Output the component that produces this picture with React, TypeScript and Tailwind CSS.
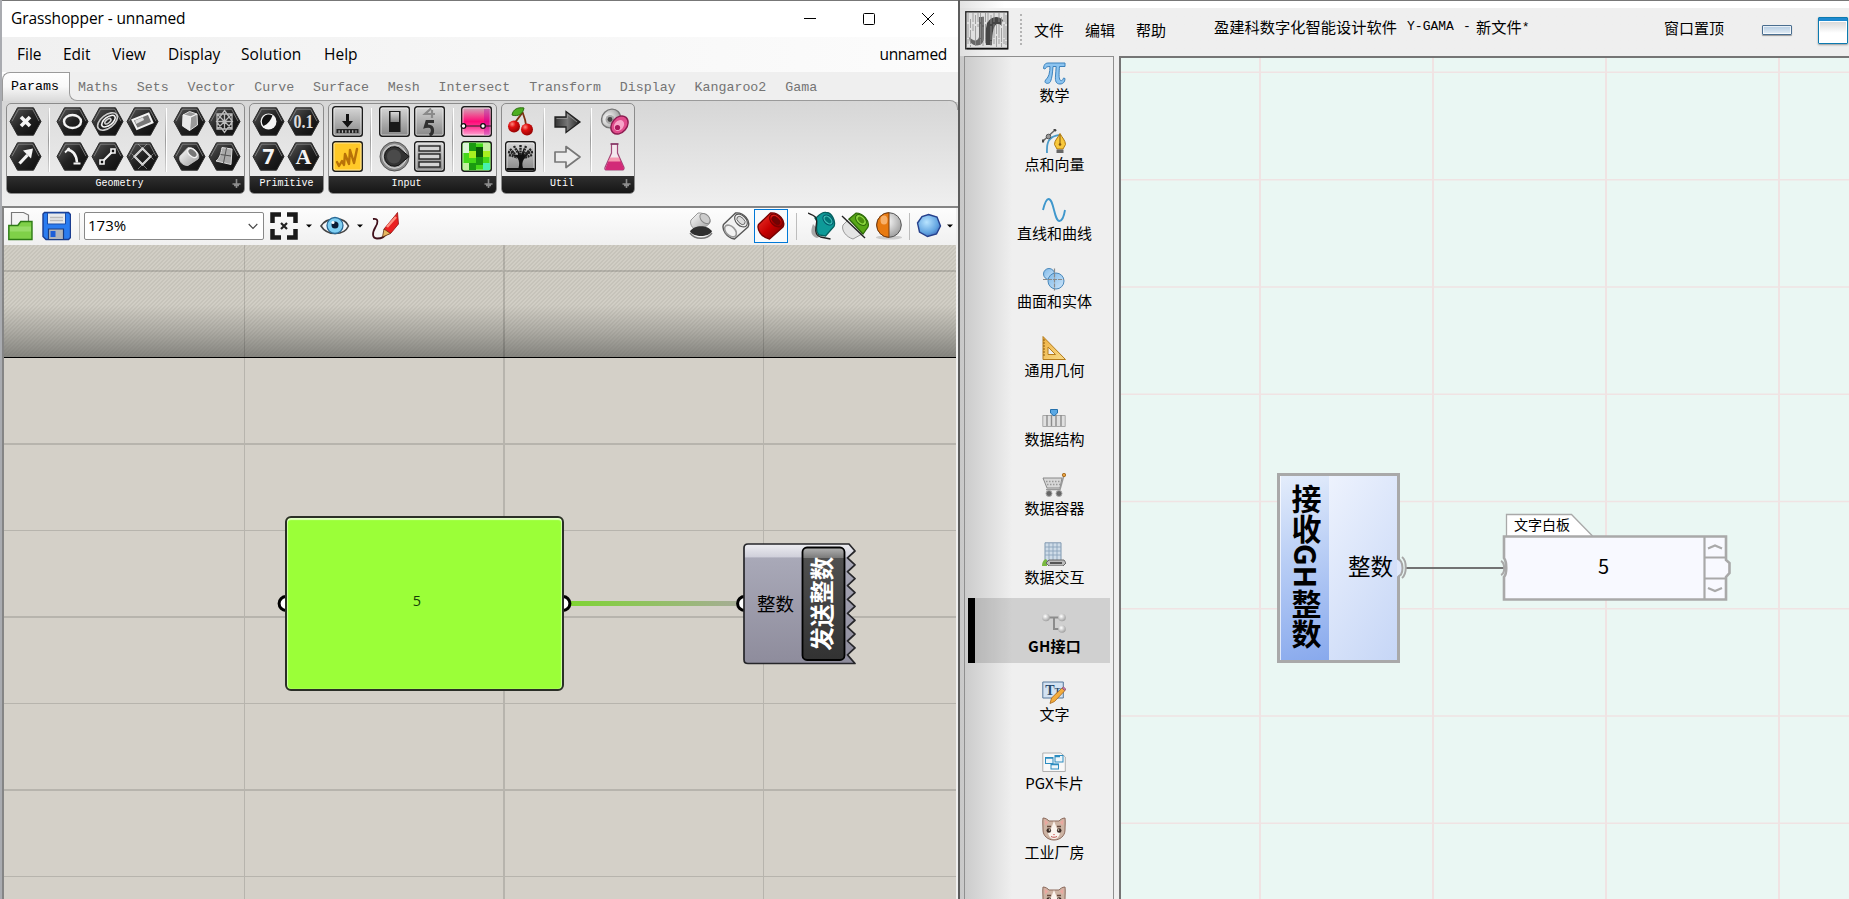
import React from "react";

const UI = "font-['Open_Sans','Noto_Sans_CJK_SC',sans-serif]";
const MONO = "font-['Liberation_Mono','Noto_Sans_CJK_SC',monospace]";
const CJK = "font-['Noto_Sans_CJK_SC',sans-serif]";

/* ---------- shared gradients ---------- */

function Defs() {
  return (
    <svg width="0" height="0" className="absolute">
      <defs>
        <linearGradient id="hex" x1="0" y1="0" x2="1" y2="1">
          <stop offset="0" stopColor="#5a5a5a" />
          <stop offset="0.5" stopColor="#222" />
          <stop offset="1" stopColor="#0c0c0c" />
        </linearGradient>
        <linearGradient id="silver" x1="0" y1="0" x2="0" y2="1">
          <stop offset="0" stopColor="#d8d8d8" />
          <stop offset="1" stopColor="#868686" />
        </linearGradient>
        <linearGradient id="dark" x1="0" y1="0" x2="1" y2="0">
          <stop offset="0" stopColor="#333" />
          <stop offset="0.5" stopColor="#777" />
          <stop offset="1" stopColor="#222" />
        </linearGradient>
        <linearGradient id="white" x1="0" y1="0" x2="1" y2="1">
          <stop offset="0" stopColor="#fff" />
          <stop offset="1" stopColor="#999" />
        </linearGradient>
        <linearGradient id="pink" x1="0" y1="0" x2="0" y2="1">
          <stop offset="0" stopColor="#c8b4bc" />
          <stop offset="0.3" stopColor="#f04c90" />
          <stop offset="0.5" stopColor="#ff0a78" />
          <stop offset="0.7" stopColor="#ff3c98" />
          <stop offset="1" stopColor="#ffb0d8" />
        </linearGradient>
        <linearGradient id="sky" x1="0" y1="0" x2="1" y2="1">
          <stop offset="0" stopColor="#7db8e8" />
          <stop offset="1" stopColor="#cfe6fa" />
        </linearGradient>
        <linearGradient id="gold" x1="0" y1="0" x2="1" y2="1">
          <stop offset="0" stopColor="#f0b040" />
          <stop offset="1" stopColor="#f7dc8c" />
        </linearGradient>
        <radialGradient id="cherry" cx="0.35" cy="0.3" r="0.8">
          <stop offset="0" stopColor="#ff8a80" />
          <stop offset="0.35" stopColor="#e01010" />
          <stop offset="1" stopColor="#800" />
        </radialGradient>
        <radialGradient id="gem" cx="0.4" cy="0.35" r="0.8">
          <stop offset="0" stopColor="#b8e4ff" />
          <stop offset="0.6" stopColor="#62a4e0" />
          <stop offset="1" stopColor="#2c4fa8" />
        </radialGradient>
        <radialGradient id="ball" cx="0.4" cy="0.35" r="0.7">
          <stop offset="0" stopColor="#fff" />
          <stop offset="1" stopColor="#9a9a9a" />
        </radialGradient>
        <linearGradient id="redcyl" x1="0" y1="0" x2="1" y2="1">
          <stop offset="0" stopColor="#ee3a30" />
          <stop offset="0.5" stopColor="#c80000" />
          <stop offset="1" stopColor="#6c0000" />
        </linearGradient>
      </defs>
    </svg>
  );
}

/* ---------- ribbon icons ---------- */

function Hex({ children }: { children: React.ReactNode }) {
  return (
    <svg width="33" height="31" viewBox="0 0 33 31">
      <path d="M1 15.5 8.5 1.8h16L32 15.5 24.5 29.2h-16Z" fill="url(#hex)" stroke="#2a2a2a" strokeWidth="1" />
      <path d="M3 15.2 9.6 3.2h14L30 15.2" fill="none" stroke="#8a8a8a" strokeWidth="1" opacity=".8" />
      {children}
    </svg>
  );
}

function Tile({ fill = "url(#silver)", children }: { fill?: string; children: React.ReactNode }) {
  return (
    <svg width="33" height="31" viewBox="0 0 33 31">
      <rect x="1.7" y="0.7" width="29.6" height="29.6" rx="2.5" fill={fill} stroke="#1c1c1c" strokeWidth="1.4" />
      <rect x="3" y="2" width="27" height="27" rx="1.5" fill="none" stroke="#fff" strokeWidth="1" opacity=".55" />
      {children}
    </svg>
  );
}

const W = "#f4f4f4";

const icons: Record<string, React.ReactNode> = {
  cross: (
    <Hex>
      <path d="m12 11 9 9m0-9-9 9" stroke={W} strokeWidth="3.6" />
    </Hex>
  ),
  vec: (
    <Hex>
      <path d="m10.500 22.500 8-8.500" stroke={W} strokeWidth="3.200" />
      <path d="M14 9.500 24 7.500 22 17.500Z" fill={W} />
    </Hex>
  ),
  circle: (
    <Hex>
      <ellipse cx="16.500" cy="15.500" rx="8.500" ry="6.500" fill="none" stroke={W} strokeWidth="2.400" />
    </Hex>
  ),
  arc: (
    <Hex>
      <path d="M11 8.500c7 1 9.500 6 10 13" fill="none" stroke={W} strokeWidth="2.600" />
      <path d="M9 11.500 13.500 7M17.500 22.500h7" stroke={W} strokeWidth="1.800" />
    </Hex>
  ),
  spiral: (
    <Hex>
      <g fill="none" stroke="#ccc" strokeWidth="1.600" transform="rotate(-38 16.500 15.500)">
        <ellipse cx="16.500" cy="15.500" rx="11.500" ry="6.500" />
        <ellipse cx="17.500" cy="15.800" rx="8" ry="4" stroke={W} />
        <ellipse cx="17" cy="15.500" rx="3.600" ry="1.800" />
      </g>
    </Hex>
  ),
  line: (
    <Hex>
      <path d="m11.500 20.500 10-10" stroke={W} strokeWidth="2.200" />
      <path d="M9 19h4v4H9ZM20 8h4v4h-4Z" fill="#111" stroke={W} strokeWidth="1.600" />
    </Hex>
  ),
  rect: (
    <Hex>
      <path d="m6.500 14 16-6.500 4 9L11 23Z" fill="#777" stroke={W} strokeWidth="2" />
      <path d="m9 14.500 8-3.200 1 2.600-8 4Z" fill="#ddd" />
    </Hex>
  ),
  plane: (
    <Hex>
      <path d="m16.500 7.500 8 8-8 8-8-8Z" fill="none" stroke="#e4e4e4" strokeWidth="2" />
      <path d="m12 3 15.500 15.500M21 3 5.500 18.500M5.500 12.500 21 28M27.500 12.500 12 28" stroke="#bbb" strokeWidth="1" opacity=".55" />
    </Hex>
  ),
  box: (
    <Hex>
      <path d="m10 9 6.500-3.500L24 8l.5 11-8 5.500-7-4.500Z" fill="#999" stroke="#ddd" strokeWidth="1" />
      <path d="m10 9 7.500 2L24 8M17.500 11l-1 13.500" stroke={W} strokeWidth="1.300" fill="none" />
      <path d="m10 9 7.500 2-1 13.500-7-4.500Z" fill="#e8e8e8" />
    </Hex>
  ),
  mesh: (
    <Hex>
      <path
        d="M9 8h15v15H9ZM9 15.500h15M16.500 8v15M9 8l15 15M24 8 9 23M16.500 4.500l8 11-8 11-8-11Z"
        fill="none"
        stroke="#bbb"
        strokeWidth="1.300"
      />
    </Hex>
  ),
  brep: (
    <Hex>
      <path d="M15 6.500 7 15c-2 4 2 10 8 9.500L25 18c3-4-3-12-10-11.500Z" fill="url(#white)" stroke="#ccc" strokeWidth=".8" />
      <ellipse cx="19.500" cy="12" rx="5.500" ry="3.500" transform="rotate(42 19.500 12)" fill="#777" stroke={W} strokeWidth="1.400" />
    </Hex>
  ),
  surf: (
    <Hex>
      <path d="M14 6.500 24 8l-1 15.500L8 20c4-3 5-8 6-13.500Z" fill="#aaa" stroke="#ddd" />
      <path d="M12.500 13.500 23 15M18.500 7l-3 15" stroke="#555" strokeWidth="1" fill="none" />
    </Hex>
  ),
  bool: (
    <Hex>
      <circle cx="16.500" cy="15.500" r="8" fill={W} />
      <path d="M11.500 20A7 7 0 0 1 20.500 9.500C19 14 16 18 11.500 20Z" fill="#111" />
    </Hex>
  ),
  num: (
    <Hex>
      <text x="16.500" y="22" textAnchor="middle" fontSize="19" fontWeight="700" fill="#dcdcdc" className="font-['Liberation_Serif',serif]" textLength="20" lengthAdjust="spacingAndGlyphs">
        0.1
      </text>
    </Hex>
  ),
  int: (
    <Hex>
      <text x="16.500" y="22.500" textAnchor="middle" fontSize="21" fontWeight="700" fill={W} className="font-['Open_Sans',sans-serif]">
        7
      </text>
    </Hex>
  ),
  text: (
    <Hex>
      <text x="16.500" y="22.500" textAnchor="middle" fontSize="22" fontWeight="700" fill={W} className="font-['Liberation_Serif',serif]">
        A
      </text>
    </Hex>
  ),
  button: (
    <Tile>
      <path d="M15 8h3v7h4l-5.500 6.500L11 15h4Z" fill="#111" />
      <path d="M5.500 23h22v4h-22Z" fill="#222" />
      <path d="M7.500 25.500h18" stroke="#bbb" strokeWidth="2.500" strokeDasharray="1.200 2.200" />
    </Tile>
  ),
  graph: (
    <Tile fill="#ffc928">
      <path d="m6 21 2 4 3-5 2 4 1-11 4 10 1-14 4 13 3-14" fill="none" stroke="#b87208" strokeWidth="2.400" strokeLinejoin="round" strokeLinecap="round" />
    </Tile>
  ),
  toggle: (
    <Tile>
      <rect x="11" y="5" width="11.500" height="21" fill="#1a1a1a" />
      <rect x="12.500" y="6" width="8.500" height="10" fill="url(#silver)" />
    </Tile>
  ),
  knob: (
    <svg width="33" height="31" viewBox="0 0 33 31">
      <circle cx="16.500" cy="15.500" r="14.500" fill="#8a8a8a" stroke="#555" />
      <circle cx="16.500" cy="15.500" r="11.800" fill="#aaa" stroke="#e0e0e0" strokeWidth=".8" />
      <path d="M31 15.500 24 9.500a9.800 9.800 0 1 0 0 12Z" fill="#333" stroke="#111" />
      <circle cx="16" cy="15.500" r="7" fill="#4a4a4a" />
    </svg>
  ),
  digits: (
    <Tile>
      <path d="m18 2.500-6 5.500h10m-3-4v8" fill="none" stroke="#8a8a8a" strokeWidth="2.200" />
      <path d="M21 15.500h-7l-1.500 5c4-1 7 0 7 4 0 3-1 4-3 4.500" fill="none" stroke="#303030" strokeWidth="3.200" />
    </Tile>
  ),
  list: (
    <Tile>
      <g fill="#d4d4d4" stroke="#222" strokeWidth="1.400">
        <rect x="6" y="5" width="21" height="5" />
        <rect x="6" y="13" width="21" height="5" />
        <rect x="6" y="21" width="21" height="5" />
      </g>
    </Tile>
  ),
  gradient: (
    <Tile fill="url(#pink)">
      <path d="M24 3h6v26h-6Z" fill="#b000a0" opacity=".35" />
      <path d="M2 20h29" stroke="#222" />
      <circle cx="3.500" cy="20" r="2.300" fill="#fff" stroke="#111" strokeWidth="1.300" />
      <circle cx="23" cy="20" r="2.300" fill="#fff" stroke="#111" strokeWidth="1.300" />
    </Tile>
  ),
  swatch: (
    <Tile fill="#44d818">
      <path d="M3 2h6v10H3Z" fill="#dcf5d8" />
      <path d="M9 2h7v8H9ZM16 16h7v8h-7ZM9 22h7v7H9Z" fill="#1a9a10" />
      <path d="M16 6h7v10h-7Z" fill="#0a5a08" />
      <path d="M9 10h7v7H9ZM23 10h7v6h-7Z" fill="#a8f020" />
      <path d="M23 2h7v8h-7ZM3 22h6v7H3Z" fill="#c4f0a0" />
      <path d="M23 22h7v7h-7Z" fill="#48f0b0" />
    </Tile>
  ),
  cherry: (
    <svg width="33" height="31" viewBox="0 0 33 31">
      <path d="M18.500 6c-2 5-7 8-8.500 13M18.500 6c2 5 3.500 9 4 16" fill="none" stroke="#7a3010" strokeWidth="1.800" />
      <path d="M8 9c1-6 6-8 12-7-1 6-6 9-12 7Z" fill="#4caf20" stroke="#2c6e10" />
      <circle cx="10" cy="20.500" r="6" fill="url(#cherry)" />
      <circle cx="23" cy="23.500" r="6" fill="url(#cherry)" />
    </svg>
  ),
  tree: (
    <Tile>
      <path d="M14.500 27c1-4 1-7-1-10L7 13l7 1-1-6 4 6 3-7v7l6-3-6 7c-2 3-2 6-1 9Z" fill="#111" />
      <path
        d="M5 14c3 1 6 1 8 3M6 8l5 5M10 5l4 7M16.500 4v10M22 5l-3 8M27 8l-7 6M28 14l-8 3M4 11l6 1M29 11l-6 1"
        fill="none"
        stroke="#222"
        strokeWidth="2.400"
        strokeDasharray="2 .7"
      />
      <path d="M2.500 27h28v2.500h-28Z" fill="#111" />
    </Tile>
  ),
  arrow: (
    <svg width="33" height="31" viewBox="0 0 33 31">
      <path d="M4 11h11V5.500l14 10.500-14 10.500V21H4Z" fill="url(#dark)" stroke="#222" strokeWidth="1.300" />
      <path d="M5.500 12.500h11V8.500l9.500 7.500" fill="none" stroke="#999" strokeWidth=".8" />
    </svg>
  ),
  arrowLight: (
    <svg width="33" height="31" viewBox="0 0 33 31">
      <path d="M4 11h11V5.500l14 10.500-14 10.500V21H4Z" fill="#ececec" stroke="#777" strokeWidth="1.700" strokeLinejoin="round" />
    </svg>
  ),
  cells: (
    <svg width="33" height="31" viewBox="0 0 33 31">
      <ellipse cx="13" cy="12.500" rx="10" ry="8.800" transform="rotate(-45 13 12.500)" fill="url(#ball)" stroke="#777" strokeWidth="1.400" />
      <circle cx="12" cy="13.500" r="4.500" fill="#aaa" />
      <circle cx="12" cy="13.500" r="2.400" fill="#444" />
      <ellipse cx="21.500" cy="19" rx="10" ry="7.500" transform="rotate(-50 21.500 19)" fill="#e04c8c" stroke="#8c1c50" strokeWidth="1.400" />
      <ellipse cx="21" cy="19.500" rx="6" ry="4.500" transform="rotate(-50 21 19.500)" fill="#f7a4c8" />
      <circle cx="19.500" cy="21.500" r="2.600" fill="#a8185c" />
    </svg>
  ),
  flask: (
    <svg width="33" height="31" viewBox="0 0 33 31">
      <path d="M13.500 3h6v9l6.500 14.500c.5 2-1 2.500-2 2.500H9c-2 0-2.500-1-2-2.500L13.500 12Z" fill="#f4e8ee" stroke="#a04878" strokeWidth="1.200" />
      <path d="M11.500 17h10l4.500 10c0 1.500-1 2-2 2H9c-1.500 0-2-1-1.500-2Z" fill="#d22a78" />
      <path d="M12 16.500h9l1.500 4H10Z" fill="#f598b0" />
      <path d="M12.500 3h8" stroke="#803060" strokeWidth="1.500" />
    </svg>
  ),
};

type Group = { label: string; plus: boolean; width: string; cols: (string[] | null)[] };

const groups: Group[] = [
  {
    label: "Geometry",
    plus: true,
    width: "w-[239px]",
    cols: [["cross", "vec"], null, ["circle", "arc"], ["spiral", "line"], ["rect", "plane"], null, ["box", "brep"], ["mesh", "surf"]],
  },
  { label: "Primitive", plus: false, width: "w-[75px]", cols: [["bool", "int"], ["num", "text"]] },
  {
    label: "Input",
    plus: true,
    width: "w-[169px]",
    cols: [["button", "graph"], null, ["toggle", "knob"], ["digits", "list"], null, ["gradient", "swatch"]],
  },
  {
    label: "Util",
    plus: true,
    width: "w-[134px]",
    cols: [["cherry", "tree"], null, ["arrow", "arrowLight"], null, ["cells", "flask"]],
  },
];

function RibbonGroup({ label, plus, width, cols }: Group) {
  return (
    <div className={`${width} flex h-[91px] flex-col overflow-hidden rounded-[5px] border border-[#8c8c8c] bg-gradient-to-b from-[#dcdcdc] to-[#eeeeee]`}>
      <div className="flex h-[72px] pl-px">
        {cols.map((c, i) =>
          c ? (
            <div key={i} className="flex w-[35px] shrink-0 flex-col items-center">
              {c.map((n) => (
                <div key={n} className="flex h-[35px] items-center">
                  {icons[n]}
                </div>
              ))}
            </div>
          ) : (
            <div key={i} className="flex w-3 shrink-0 justify-center py-1">
              <div className="w-[2px] border-r border-white bg-gradient-to-b from-[#dcdcdc] via-[#9c9c9c] to-[#d4d4d4]" />
            </div>
          ),
        )}
      </div>
      <div className={`relative flex flex-1 justify-center bg-gradient-to-b from-[#303030] to-[#161616] ${plus ? "pr-[12px]" : ""}`}>
        <span className={`${MONO} text-[10px] leading-[15px] text-white`}>{label}</span>
        {plus && (
          <svg className="absolute top-[3px] right-[3px]" width="9" height="10" viewBox="0 0 9 10">
            <path d="M4.500 0v9M.5 5h8M2 6.500h5" stroke="#8c8c8c" strokeWidth="1.600" />
          </svg>
        )}
      </div>
    </div>
  );
}

/* ---------- left window ---------- */

function Caret() {
  return (
    <svg width="6" height="4" viewBox="0 0 6 4">
      <path d="M0 .5h6L3 3.500Z" fill="#000" />
    </svg>
  );
}

function Cylinder({ fill, stroke, mouth }: { fill: string; stroke: string; mouth: string }) {
  return (
    <g>
      <path d="M14.500 2 2.500 13.500c-2 5 3 13 11 14.500L27 16c3-6-4-15-12.500-14Z" fill={fill} stroke={stroke} strokeWidth="1.400" strokeLinejoin="round" />
      <ellipse cx="20" cy="9.500" rx="7.500" ry="5" transform="rotate(45 20 9.500)" fill={fill} stroke={stroke} strokeWidth="1.200" />
      <ellipse cx="20" cy="9.500" rx="5" ry="2.900" transform="rotate(45 20 9.500)" fill={mouth} stroke={stroke} strokeWidth=".8" />
    </g>
  );
}

function GrassToolbar() {
  return (
    <div className="flex h-[37px] shrink-0 items-center bg-gradient-to-b from-[#fdfdfd] to-[#f0f0f0] pb-[1px] pl-[4px]">
      <svg width="26" height="30" viewBox="0 0 26 30">
        <path d="M3.500 1.500h12l5 2.500v14h-17Z" fill="#f4f4f4" stroke="#777" strokeWidth="1.200" />
        <path d="M.8 28.500v-14h9l3-4H24v18Z" fill="#7fd048" stroke="#2c7a14" strokeWidth="1.400" />
        <path d="M2 18h21" stroke="#b0e888" strokeWidth="5" opacity=".5" />
      </svg>
      <svg className="ml-[8px]" width="29" height="30" viewBox="0 0 29 30">
        <path d="M2.500 1.500h24l2 2v23l-2 2H4l-3-3V3Z" fill="#2a7cf0" stroke="#1a3c90" strokeWidth="1.400" />
        <path d="M5.500 2h18v11h-18Z" fill="#e8eaec" stroke="#1a4ca8" />
        <path d="M8 6.500h13M8 9.500h13" stroke="#bbb" strokeWidth="1.500" />
        <path d="M6.500 18h15v10.500h-15Z" fill="#b0b4ba" stroke="#1a3c80" strokeWidth="1.200" />
        <path d="M8.500 20h5v6h-5Z" fill="#1c5ed8" />
      </svg>
      <div className="ml-[8px] h-[27px] w-px bg-[#bdbdbd]" />
      <div className="ml-[4px] flex h-[28px] w-[180px] items-center justify-between rounded-[2px] border border-[#888] bg-white pr-[5px] pl-[3px]">
        <span className="-mt-px text-[15px] leading-none">173%</span>
        <svg width="10" height="7" viewBox="0 0 10 7">
          <path d="m.7 1 4.300 4.500L9.300 1" fill="none" stroke="#444" strokeWidth="1.100" />
        </svg>
      </div>
      <svg className="ml-[5px]" width="30" height="30" viewBox="0 0 30 30">
        <path d="M3.500 12V3.500H12M18 3.500h8.500V12M26.500 18v8.500H18M12 26.500H3.500V18" fill="none" stroke="#1a1a1a" strokeWidth="4.500" />
        <path d="m12 12 6 6m0-6-6 6" stroke="#222" strokeWidth="2.200" />
      </svg>
      <div className="ml-[7px] flex">
        <Caret />
      </div>
      <svg className="ml-[8px]" width="30" height="22" viewBox="0 0 30 22">
        <path d="M1 11C6 2.500 24 .5 28.500 11 24 21 7 21 1 11Z" fill="#f4f6f8" stroke="#444" strokeWidth="1.600" />
        <circle cx="15" cy="10.500" r="8" fill="#7fd0f4" stroke="#2a6a96" strokeWidth="1.300" />
        <circle cx="15" cy="10" r="3.500" fill="#0a1c34" />
        <circle cx="13" cy="7.500" r="1.500" fill="#fff" />
      </svg>
      <div className="ml-[7px] flex">
        <Caret />
      </div>
      <svg className="ml-[8px]" width="30" height="30" viewBox="0 0 30 30">
        <path d="M2 8c6-1 5 4 2.500 8C1 22 1 27 6 27.500c6 0 7-2 9.500-5" fill="none" stroke="#40101a" strokeWidth="1.800" />
        <path d="M13 18 25 3.500l1.500-2L27.500 13 20 22l-5 2Z" fill="#ea2020" stroke="#901010" strokeWidth=".8" />
        <path d="m11.500 26 1.500-8 6.500 4.500Z" fill="#e8b860" stroke="#603010" strokeWidth=".8" />
        <path d="m16 16 9-10" stroke="#ff9080" strokeWidth="2.500" />
      </svg>

      <div className="ml-auto flex items-center">
        <svg width="28" height="30" viewBox="0 0 28 30">
          <path d="M11 2 4 9c-2 5 3 11 9 11l9-7c4-5-4-12-11-11Z" fill="url(#white)" stroke="#999" />
          <ellipse cx="18" cy="7.500" rx="6" ry="4" transform="rotate(45 18 7.500)" fill="#ccc" stroke="#888" />
          <path d="M3 20.500c4-7 18-7 22 0-4 6-18 6-22 0Z" fill="#303030" />
          <path d="M3 22c5 7 17 7 22 0" fill="none" stroke="#777" strokeWidth="1.400" />
        </svg>
        <svg className="ml-[6px]" width="30" height="30" viewBox="0 0 30 30">
          <Cylinder fill="#f2f2f2" stroke="#555" mouth="#dcdcdc" />
          <ellipse cx="9.500" cy="20" rx="7" ry="4.500" transform="rotate(45 9.500 20)" fill="none" stroke="#999" strokeWidth="1.600" />
        </svg>
        <div className="ml-[3px] flex h-[34px] w-[34px] items-center justify-center border border-[#0078d7] bg-[#f8fafc]">
          <svg width="30" height="30" viewBox="0 0 30 30">
            <Cylinder fill="url(#redcyl)" stroke="#700" mouth="#700404" />
          </svg>
        </div>
        <div className="ml-[8px] h-[27px] w-px bg-[#bdbdbd]" />
        <svg className="ml-[11px]" width="28" height="30" viewBox="0 0 28 30">
          <path d="M5 13c-3 8-2 12 4 14l6-3Z" fill="#777" opacity=".6" />
          <path d="M9 6c3-3 6-5 9-4.500 6 0 10 9 8 14L17.500 25 11 24c-3-3-3-6-2-11 0-3 0-4-2-6Z" fill="#0e9a98" stroke="#06605e" strokeWidth="1.300" />
          <ellipse cx="20" cy="9" rx="6" ry="4" transform="rotate(45 20 9)" fill="#3cbcb4" stroke="#056" />
          <ellipse cx="20" cy="9" rx="4" ry="2.200" transform="rotate(45 20 9)" fill="#077" />
          <path d="M0 2c7 3 9.500 4 8.500 10-1 6-2 12 4 14l10 2" fill="none" stroke="#222" strokeWidth="1.300" />
        </svg>
        <svg className="ml-[5px]" width="29" height="30" viewBox="0 0 29 30">
          <path d="M8 8 2 14c-2 5 3 12 10 14l9-5Z" fill="#e4e4e4" stroke="#999" />
          <path d="m8 8 7-6c7 0 14 8 12 14l-5 7Z" fill="#58a818" stroke="#2c6808" strokeWidth="1.200" />
          <ellipse cx="20" cy="9" rx="6.500" ry="4.200" transform="rotate(45 20 9)" fill="#8ed840" stroke="#2c6808" />
          <ellipse cx="20" cy="9" rx="4" ry="2.300" transform="rotate(45 20 9)" fill="#4a9010" />
          <path d="m1 5 23 22" stroke="#222" strokeWidth="1.400" />
        </svg>
        <svg className="ml-[5px]" width="29" height="30" viewBox="0 0 29 30">
          <ellipse cx="14" cy="26.500" rx="13" ry="2" fill="#bbb" opacity=".7" />
          <circle cx="14" cy="14" r="12.300" fill="url(#ball)" stroke="#555" />
          <path d="M14 1.700a12.300 12.300 0 0 0 0 24.600Z" fill="#e87a10" stroke="#7a3a08" />
          <ellipse cx="9" cy="9" rx="3.500" ry="4.500" fill="#ffc890" opacity=".7" />
        </svg>
        <div className="ml-[5px] h-[27px] w-px bg-[#bdbdbd]" />
        <svg className="ml-[6px]" width="26" height="26" viewBox="0 0 26 26">
          <path d="M12.500 1.500 21 4l3.500 9-4 8-9 2.500-8-4.500L1.500 10 6 3.500Z" fill="url(#gem)" stroke="#26408c" strokeWidth="1.400" />
        </svg>
        <div className="mr-[3px] ml-[5px] flex">
          <Caret />
        </div>
      </div>
    </div>
  );
}

function Zigzag() {
  let d = "M5 1H106";
  const peaks = 8;
  for (let i = 0; i < peaks; i++) {
    const y = 8 + i * 13.85;
    d += ` L112 ${y} L104.500 ${y + 6.9}`;
  }
  d += " L112 120.500 H5 Q1 120.500 1 116.500 V5 Q1 1 5 1Z";
  return (
    <svg width="114" height="122" viewBox="0 0 114 122">
      <defs>
        <linearGradient id="body" x1="0" y1="0" x2="0" y2="1">
          <stop offset="0" stopColor="#eeeef2" />
          <stop offset="0.11" stopColor="#cfcfda" />
          <stop offset="0.115" stopColor="#a9a9b8" />
          <stop offset="1" stopColor="#8e8c9c" />
        </linearGradient>
        <linearGradient id="cap" x1="0" y1="0" x2="0" y2="1">
          <stop offset="0" stopColor="#b4b4b4" />
          <stop offset="0.09" stopColor="#7c7c7c" />
          <stop offset="0.095" stopColor="#505050" />
          <stop offset="1" stopColor="#323232" />
        </linearGradient>
      </defs>
      <path d={d} fill="url(#body)" stroke="#26262a" strokeWidth="1.700" strokeLinejoin="round" />
      <rect x="59.500" y="4.500" width="42" height="112.500" rx="4.500" fill="url(#cap)" stroke="#000" strokeWidth="1.800" />
    </svg>
  );
}

function GrassCanvas() {
  return (
    <div className="relative flex-1 overflow-hidden bg-[#d4d0c8]">
      <div className="absolute inset-x-0 top-0 h-[112px] bg-[repeating-linear-gradient(135deg,#d1cec5_0px,#d1cec5_1.400px,#c6c3ba_1.400px,#c6c3ba_2.828px)]" />
      <div className="absolute inset-x-0 top-[60px] h-[52px] bg-gradient-to-b from-transparent via-[#6c6c68]/35 to-[#6c6c68]/75" />
      <svg className="absolute top-0 left-0" width="952" height="654" viewBox="0 0 952 654">
        <g fill="#000" opacity=".13">
          <path d="M240 0h1v654h-1ZM499 0h2v654h-2ZM759 0h1v654h-1Z" />
          <path d="M0 25h952v2H0ZM0 198h952v2H0ZM0 285h952v1H0ZM0 371h952v2H0ZM0 458h952v1H0ZM0 544h952v2H0ZM0 631h952v1H0Z" />
        </g>
        <path d="M0 112h952v1H0Z" fill="#000" />
        <defs>
          <linearGradient id="wire" x1="0" y1="0" x2="1" y2="0">
            <stop offset="0" stopColor="#7fd432" />
            <stop offset="1" stopColor="#a6ac96" />
          </linearGradient>
        </defs>
        <path d="M564 356h172v5H564Z" fill="url(#wire)" />
        <circle cx="282" cy="358.500" r="6.900" fill="#fff" stroke="#000" strokeWidth="3" />
        <circle cx="559" cy="358.500" r="6.900" fill="#fff" stroke="#000" strokeWidth="3" />
        <circle cx="740.500" cy="358.500" r="6.900" fill="#fff" stroke="#000" strokeWidth="3" />
      </svg>
      <div className="absolute top-[271px] left-[281px] flex h-[175px] w-[279px] items-center justify-center rounded-[6px] border-[2px] border-[#2a2e26] bg-[#9bff38] shadow-[inset_0_2px_1px_#ffffffaa,inset_1px_0_1px_#ffffff88,inset_-1px_0_1px_#ffffff88]">
        <span className="-mt-[5px] -ml-[15px] text-[14.500px] leading-none text-[#123c06]">5</span>
      </div>
      <div className="absolute top-[298px] left-[739px]">
        <Zigzag />
        <span className={`absolute top-[49px] left-[14px] ${CJK} text-[18.500px] leading-[22px] whitespace-nowrap`}>整数</span>
        <div className="absolute top-[4px] left-[58px] flex h-[113px] w-[42px] items-center justify-center">
          <span className={`-rotate-90 ${CJK} text-[23.500px] leading-none font-bold whitespace-nowrap text-white`}>发送整数</span>
        </div>
      </div>
    </div>
  );
}

const tabs = ["Maths", "Sets", "Vector", "Curve", "Surface", "Mesh", "Intersect", "Transform", "Display", "Kangaroo2", "Gama"];

function GrasshopperWindow() {
  return (
    <div className={`flex h-full w-[958px] shrink-0 flex-col border-l-2 border-[#a9abb0] bg-[#efefef] ${UI} text-black`}>
      <div className="flex h-[37px] shrink-0 items-center border-t border-[#777] bg-white pl-[9px]">
        <span className="text-[15.500px] tracking-[-0.100px]">Grasshopper - unnamed</span>
        <div className="ml-auto flex items-center gap-[47px] pr-[24px]">
          <svg width="12" height="12" viewBox="0 0 12 12">
            <path d="M0 5.500h12" stroke="#000" />
          </svg>
          <svg width="12" height="12" viewBox="0 0 12 12">
            <rect x=".5" y=".5" width="11" height="11" rx="1" fill="none" stroke="#000" />
          </svg>
          <svg width="12" height="12" viewBox="0 0 12 12">
            <path d="m0 0 12 12M12 0 0 12" stroke="#000" />
          </svg>
        </div>
      </div>
      <div className="flex h-[35px] shrink-0 items-center bg-gradient-to-r from-[#f0f0f0] to-[#fcfcfc] pt-px pr-[11px] pl-[15px] text-[15.500px]">
        <span className="w-[46px]">File</span>
        <span className="w-[49px]">Edit</span>
        <span className="w-[56px]">View</span>
        <span className="w-[73px]">Display</span>
        <span className="w-[83px] tracking-[0.120px]">Solution</span>
        <span>Help</span>
        <span className="ml-auto tracking-[-0.300px]">unnamed</span>
      </div>
      <div className="relative z-10 -mb-px flex h-[29px] shrink-0 bg-gradient-to-b from-white via-[#f8f8f8] to-[#dadada]">
        <div className={`flex w-[67px] items-center rounded-tl-[8px] border-t border-l border-[#9a9a9a] pb-px pl-[8px] ${MONO} text-[13.300px]`}>
          Params
        </div>
        <div className={`flex flex-1 items-center gap-[18.850px] rounded-bl-[8px] border-b border-l border-[#9a9a9a] bg-[#efefef] pt-[3px] pl-[8px] ${MONO} text-[13.300px] text-[#747474]`}>
          {tabs.map((t) => (
            <span key={t}>{t}</span>
          ))}
        </div>
        <div className="-mb-px w-[10px] bg-[#efefef]">
          <div className="mt-[28px] h-[10px] rounded-tr-[8px] border-t border-r border-[#9a9a9a] bg-[#d8d8d8]" />
        </div>
      </div>
      <div className="flex h-[106px] shrink-0 gap-1 bg-gradient-to-b from-[#d6d6d6] to-[#efefef] pt-[3px] pl-[4px]">
        {groups.map((g) => (
          <RibbonGroup key={g.label} {...g} />
        ))}
      </div>
      <div className="flex min-h-0 flex-1 flex-col border-t-2 border-l-2 border-[#858585] pr-[2px]">
        <GrassToolbar />
        <GrassCanvas />
      </div>
    </div>
  );
}

/* ---------- right window ---------- */

function Cat() {
  return (
    <svg width="24" height="24" viewBox="0 0 24 24">
      <path d="M1 1c3 0 5 2 6 3h10c1-1 3-3 6-3 .5 4 0 8 0 12 0 6-5 10-11 10S1 19 1 13C1 9 .5 5 1 1Z" fill="#cdb4a4" stroke="#8c6a5c" strokeWidth="1" />
      <path d="m2.500 2.500 4 3-3.500 3ZM21.500 2.500l-4 3 3.500 3Z" fill="#eaa8a0" />
      <path d="M12 4c2 5 3 9 6 12-1 4-3 6-6 6s-5-2-6-6c3-3 4-7 6-12Z" fill="#fbf4ee" />
      <path d="M5 9.500h4M15 9.500h4" stroke="#66483c" strokeWidth="1.500" />
      <circle cx="6.800" cy="13.500" r="2.300" fill="#3c2c26" />
      <circle cx="17.200" cy="13.500" r="2.300" fill="#3c2c26" />
      <circle cx="7.500" cy="13" r=".8" fill="#e8e0d0" />
      <circle cx="16.500" cy="13" r=".8" fill="#e8e0d0" />
      <path d="M9 19.500c2 1 4 1 6 0" stroke="#c0504c" fill="none" />
      <path d="M11 17h2l-1 1.500Z" fill="#d0605c" />
    </svg>
  );
}

const sideIcons: Record<string, React.ReactNode> = {
  math: (
    <svg width="24" height="24" viewBox="0 0 24 24">
      <path d="M1.500 7.500C2 2.500 4 2 7 2h16v3.500h-5.500c-.5 6-.8 11.500.5 13.500 1.500 1.500 3 0 3.500-2l1.500.5c0 4-2.500 5.500-5 5.500-4 0-5-3-4.500-8 .2-3 .5-6.500.7-9.500H11c-.5 6.500-1 11.500-2.500 15C7.500 23 3 23 3 20.500c0-2 3-3 4-7 .7-3 1-5 1-8-3 0-4 .5-5 2.500Z" fill="#8cc4f0" stroke="#3c82bc" strokeWidth="1" />
    </svg>
  ),
  pen: (
    <svg width="24" height="24" viewBox="0 0 24 24">
      <path d="M5 24c-.5-10 1-17 13-18" fill="none" stroke="#4a9ac8" strokeWidth="1.800" />
      <path d="m1 12 12-11" stroke="#666" strokeWidth="1.500" />
      <circle cx="6.500" cy="7.500" r="2.300" fill="#999" stroke="#555" />
      <path d="M1 10.500v3M12 0l2 2" stroke="#444" strokeWidth="2.200" />
      <path d="M18 4.500c2 4 5.500 7 5.500 11L21 20h-6l-2.500-4.500C12.500 11 16 9 18 4.500Z" fill="#f8c83c" stroke="#b07a10" />
      <path d="M18 6v10" stroke="#80540c" />
      <circle cx="18" cy="15.500" r="1.300" fill="#80540c" />
      <path d="M14.500 20.500h7V24h-7Z" fill="#666" />
    </svg>
  ),
  curve: (
    <svg width="24" height="24" viewBox="0 0 24 24">
      <path d="M1 12C3 4 5 1 6.500 1 12 1 12 23 17.500 23c2.500 0 4.500-5 5.500-11" fill="none" stroke="#3f97cc" strokeWidth="1.900" />
    </svg>
  ),
  surface: (
    <svg width="24" height="24" viewBox="0 0 24 24">
      <circle cx="7" cy="7" r="5.500" fill="url(#sky)" stroke="#4a88ba" />
      <circle cx="14" cy="14" r="8" fill="url(#sky)" stroke="#4a88ba" />
      <path d="M12.500 1.500v22M1 12.500h21" stroke="#8a8a8a" strokeWidth="1.200" strokeDasharray="4 1" />
    </svg>
  ),
  ruler: (
    <svg width="24" height="24" viewBox="0 0 24 24">
      <path fillRule="evenodd" d="M1 .5 23.500 23.500H1ZM6 11v7.500h7.500Z" fill="url(#gold)" stroke="#b57c1c" />
      <path d="M1 4h2M1 7h2M1 10h2M1 13h2M1 16h2M1 19h2" stroke="#8c5c10" />
    </svg>
  ),
  struct: (
    <svg width="24" height="24" viewBox="0 0 24 24">
      <path d="M.8 10.500h22.400v11H.8Z" fill="#e0e0e0" stroke="#a8a8a8" />
      <path d="M5 10v11M9.500 10v11M14 10v11M19 10v11" stroke="#8c8c8c" strokeWidth="1.400" />
      <path d="M8.500 4.500h7V8L12 11 8.500 8Z" fill="#5aa8e4" stroke="#2470ac" />
    </svg>
  ),
  cart: (
    <svg width="24" height="24" viewBox="0 0 24 24">
      <path d="M1 5h19l-2 10H5Z" fill="#d8d8d8" stroke="#888" />
      <path d="M4 8.500h14M5 11.500h13" stroke="#999" strokeDasharray="1.500 1.500" strokeWidth="1.500" />
      <path d="m22 2-4 14.500H4" fill="none" stroke="#999" strokeWidth="1.500" />
      <circle cx="7" cy="20.500" r="3" fill="#666" stroke="#aaa" />
      <circle cx="17" cy="20.500" r="3" fill="#666" stroke="#aaa" />
      <circle cx="22" cy="2" r="1.700" fill="#e8a040" stroke="#9c6010" strokeWidth=".8" />
    </svg>
  ),
  exchange: (
    <svg width="24" height="24" viewBox="0 0 24 24">
      <path d="M3 .8h16v18H3Z" fill="#cfdce8" stroke="#7f98b0" />
      <path d="M7 1v17M11 1v17M15 1v17M3 5h16M3 9h16M3 13h16" stroke="#8ca4bc" strokeWidth=".9" />
      <path d="M0 24c0-6 4-8 5-6v6Z" fill="#78b840" />
      <path d="M7 18h15l2 3-3 3H7l-3-3Z" fill="#bbb" stroke="#666" />
      <path d="M8 21h12" stroke="#555" strokeWidth="2" />
    </svg>
  ),
  gh: (
    <svg width="24" height="24" viewBox="0 0 24 24">
      <path d="M4 6.500h16M12 6.500V18h8" fill="none" stroke="#8c8c8c" strokeWidth="2" />
      <circle cx="4" cy="6.500" r="3.800" fill="url(#ball)" />
      <circle cx="20" cy="6.500" r="3.800" fill="url(#ball)" />
      <circle cx="20" cy="18" r="3.800" fill="url(#ball)" />
    </svg>
  ),
  text: (
    <svg width="24" height="24" viewBox="0 0 24 24">
      <path d="M.8 2h20.500v16H.8Z" fill="#d3e2f2" stroke="#56789c" />
      <text x="8" y="15" textAnchor="middle" fontSize="14" fontWeight="700" fill="#28486c" className="font-['Liberation_Serif',serif]">
        T
      </text>
      <text x="15.500" y="14" textAnchor="middle" fontSize="9" fontWeight="700" fill="#28486c" className="font-['Liberation_Serif',serif]">
        T
      </text>
      <path d="M8 23.500 9.500 18 20 8l3 2.500L12.500 21.500Z" fill="#f4ac3c" stroke="#a4641c" strokeWidth=".8" />
      <path d="m20 8 1.500-1 2.300 2L23 10.500Z" fill="#d080a8" stroke="#905070" strokeWidth=".8" />
    </svg>
  ),
  card: (
    <svg width="24" height="24" viewBox="0 0 24 24">
      <path d="M.8 4h18l4.500 4v14.500H.8Z" fill="#f8f8f8" stroke="#b0b0b0" />
      <g fill="#eef6fa" stroke="#2c8cc0" strokeWidth="1">
        <rect x="3.500" y="8.500" width="7.500" height="6" />
        <rect x="13" y="6.500" width="8" height="6.500" />
        <rect x="9" y="15" width="7.500" height="5" />
      </g>
      <path d="M3.500 9H11M13 7.500h5M9 15.500h7.500" stroke="#2c8cc0" strokeWidth="1.600" />
    </svg>
  ),
  cat: <Cat />,
};

const sideItems: [string, string][] = [
  ["数学", "math"],
  ["点和向量", "pen"],
  ["直线和曲线", "curve"],
  ["曲面和实体", "surface"],
  ["通用几何", "ruler"],
  ["数据结构", "struct"],
  ["数据容器", "cart"],
  ["数据交互", "exchange"],
  ["GH接口", "gh"],
  ["文字", "text"],
  ["PGX卡片", "card"],
  ["工业厂房", "cat"],
  ["", "cat"],
];

function Sidebar() {
  return (
    <div className="flex w-[150px] shrink-0 flex-col overflow-hidden border border-b-0 border-[#8f8f8f] p-[1px]">
      <div className="-mt-[11px] flex flex-col gap-[3.820px] pr-[2px] pl-[2px]">
        {sideItems.map(([label, icon], i) => {
          const active = icon === "gh";
          return (
            <div
              key={i}
              className={`flex h-[65px] shrink-0 flex-col items-center border-l-[7px] pt-[13.500px] pl-[24px] ${active ? "border-black bg-black/13" : "border-transparent"}`}
            >
              <div className="mr-[2px]">{sideIcons[icon]}</div>
              <span className={`-mt-[1.500px] ${CJK} text-[15px] leading-[24px] text-black ${active ? "font-bold tracking-[0.200px]" : ""}`}>{label}</span>
            </div>
          );
        })}
      </div>
    </div>
  );
}

function GamaCanvas() {
  return (
    <div className="relative flex-1 overflow-hidden border-t-2 border-l-2 border-[#757575] bg-[#eaf7f3]">
      <svg className="absolute top-0 left-0" width="728" height="841" viewBox="1121 58 728 841">
        <g fill="#f0e3e3">
          <path d="M1259 58h2v841h-2ZM1432 58h2v841h-2ZM1605 58h2v841h-2ZM1778 58h2v841h-2Z" />
          <path d="M1121 71.500h728v1.500h-728ZM1121 179h728v1.500h-728ZM1121 286.300h728v1.500h-728ZM1121 393.500h728v1.500h-728ZM1121 500.800h728v1.500h-728ZM1121 608h728v1.500h-728ZM1121 715.300h728v1.500h-728ZM1121 822.500h728v1.500h-728Z" />
        </g>
        <path d="M1406 568h98" stroke="#727272" strokeWidth="1.800" />
        <path d="M1506.500 536v-21.500h65l21 21.500" fill="#fff" stroke="#a9a9a9" strokeWidth="1.300" />
        <path d="M1504 536.500h222v23.500l3.500 3v10l-3.500 4v22.500h-222v-22.500c3-3 3-15 0-19Z" fill="#f8f9ff" stroke="#a9a9a9" strokeWidth="2.600" />
        <path d="M1704.500 537v62M1704.500 557.500h22M1704.500 578.500h22" stroke="#a9a9a9" strokeWidth="2.200" />
        <path d="m1708 548.500 7-3 7 3M1708 588l7 3 7-3" fill="none" stroke="#a9a9a9" strokeWidth="2.200" />
        <path d="M1501 561c4 2 4.500 12 0 14" fill="none" stroke="#a9a9a9" strokeWidth="2" />
      </svg>

      <div className="absolute top-[415px] left-[156px] flex h-[190px] w-[123px] border-[3px] border-[#a9a9a9] bg-gradient-to-br from-[#f8faff] to-[#c6d6f6] pl-px">
        <div className="flex w-[48px] items-center justify-center bg-[linear-gradient(165deg,#e4edfb_0%,#b8cdf5_45%,#88a9ed_100%)] pb-[3px] pl-[3px]">
          <span className={`[writing-mode:vertical-rl] ${CJK} text-[30px] leading-[48px] font-bold whitespace-nowrap`}>接收GH整数</span>
        </div>
        <div className="flex flex-1 items-center justify-end pr-[4px] pb-[5px]">
          <span className={`${CJK} text-[22.500px] leading-none`}>整数</span>
        </div>
      </div>
      <svg className="absolute top-[497px] left-[275px]" width="12" height="26" viewBox="0 0 12 26">
        <path d="M1 4.500 5 7c2 3 2 9 0 12l-4 2.500Z" fill="#dfe8fa" />
        <path d="M2.500 3.500 5 6.500c2 3 2 10 0 13l-2.500 2M6 2c5 4 5 17 0 21" fill="none" stroke="#a6a6a6" strokeWidth="2" />
      </svg>
      <span className={`absolute top-[456px] left-[393px] ${CJK} text-[14px] leading-[20px]`}>文字白板</span>
      <span className={`absolute top-[494px] left-[477px] ${CJK} text-[20px] leading-[28px]`}>5</span>
    </div>
  );
}

function GamaWindow() {
  return (
    <div className="flex min-w-0 flex-1 flex-col border-l-2 border-[#5c5c5c] bg-[#efefef] text-black">
      <div className="flex h-full flex-col bg-gradient-to-r from-[#c8c8c8] to-[#efefef] bg-[length:52px_100%] bg-no-repeat">
        <div className="h-[8px] shrink-0 border-t border-[#777] bg-gradient-to-r from-[#e4e4e4] to-white to-5%" />
        <div className={`flex h-[48px] shrink-0 bg-gradient-to-r from-[#e0e0e0] to-[#efefef] to-3% pl-[5px] ${CJK} text-[15px]`}>
          <svg className="mt-[3px]" width="44" height="39" viewBox="0 0 44 39">
            <rect x=".8" y=".8" width="42" height="37" fill="#e0e0e0" stroke="#222" strokeWidth="1.400" />
            <path d="M14 6h5v21c0 8-9 10-14 4l-1-5c5 5 9 4 10 0Z" fill="#666" />
            <path d="M22 12c4-7 11-8 16-3l-2 5c-6-4-9 3-9 20h-6c-1-6-1-14 1-22Z" fill="#444" />
            <path
              d="M3 2v34M5.500 8v28M8 2v18M10.500 4v32M13 2v14M15.500 2v34M18 5v30M20.500 2v30M23 2v10M26 4v33M29 2v33M31.500 14v22M34 2v34M36.500 6v30M39 2v34M41 4v30"
              stroke="#8f8f8f"
              strokeWidth=".8"
              strokeDasharray="9 2 14 1 5 3"
            />
            <path d="M2 37.500h41" stroke="#111" strokeWidth="1.600" />
          </svg>
          <div className="mt-[6px] ml-[11px] h-[31px] w-0 border-l-2 border-dotted border-[#b4b4b4]" />
          <div className="ml-[12px] flex gap-[21px] pt-[10px] leading-[24px]">
            <span>文件</span>
            <span>编辑</span>
            <span>帮助</span>
          </div>
          <div className="ml-[48px] flex pt-[6px] leading-[24px] whitespace-pre">
            <span className="text-[15.250px]">盈建科数字化智能设计软件</span>
            <span className={`${MONO} ml-[10px] w-[56px] pt-px text-[13px]`}>Y-GAMA</span>
            <span className={`${MONO} w-[13px] pt-px text-[13px]`}>-</span>
            <span className="text-[15.250px]">新文件</span>
            <span className={`${MONO} pt-[2px] text-[13px]`}>*</span>
          </div>
          <div className="ml-auto flex pr-px">
            <span className="mr-[38px] pt-[8px] leading-[24px]">窗口置顶</span>
            <div className="mt-[17px] mr-[26px] h-[10px] w-[30px] rounded-[1px] border border-[#4a6e90] bg-gradient-to-b from-[#b4cce2] to-[#e4eef6] shadow-[0_1px_1px_#999,inset_0_0_0_1px_#ffffffaa]" />
            <div className="mt-[9px] h-[27px] w-[30px] rounded-[1px] border border-[#0c7ab0] bg-gradient-to-b from-[#ccc] to-[#fff] to-60% shadow-[0_1px_2px_#999,inset_0_0_0_1px_#fff]">
              <div className="h-[4px] border-b border-white bg-[#1e8ad0]" />
            </div>
          </div>
        </div>
        <div className="flex min-h-0 flex-1 pl-[4px]">
          <Sidebar />
          <div className="w-[5px] shrink-0" />
          <GamaCanvas />
        </div>
      </div>
    </div>
  );
}

export default function App() {
  return (
    <div className="flex h-[899px] w-[1849px] overflow-hidden">
      <Defs />
      <GrasshopperWindow />
      <GamaWindow />
    </div>
  );
}
